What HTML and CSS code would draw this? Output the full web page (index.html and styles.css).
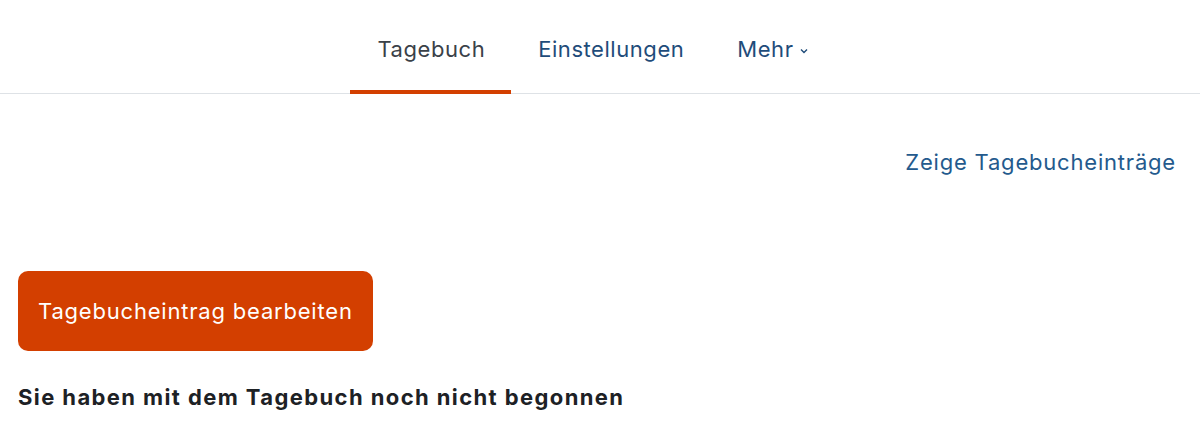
FILE: index.html
```html
<!DOCTYPE html>
<html lang="de">
<head>
    <meta charset="UTF-8">
    <meta name="viewport" content="width=device-width, initial-scale=1.0">
    <title>Tagebuch</title>
    <link rel="stylesheet" href="styles.css">
</head>
<body>
    <nav class="tabs">
        <a class="tab active" href="#">Tagebuch</a>
        <a class="tab" href="#">Einstellungen</a>
        <a class="tab" href="#">Mehr
            <svg class="caret" width="10" height="10" viewBox="0 0 10 10"><path d="M2 3.5 L5 6.5 L8 3.5" fill="none" stroke="currentColor" stroke-width="1.4"/></svg>
        </a>
    </nav>

    <main class="content">
        <div class="entries-link">
            <a href="#">Zeige Tagebucheinträge</a>
        </div>

        <button class="edit-button">Tagebucheintrag bearbeiten</button>

        <p class="notice">Sie haben mit dem Tagebuch noch nicht begonnen</p>
    </main>
</body>
</html>
```

FILE: styles.css
```css
body {
    font-family: 'Inter', sans-serif;
    margin: 0;
    background-color: #ffffff;
    color: #1d2125;
    font-size: 22px;
    line-height: 26px;
    letter-spacing: 0.8px;
}

.tabs {
    display: flex;
    justify-content: center;
    border-bottom: 1px solid #dee2e6;
    height: 94px;
    box-sizing: border-box;
    padding-right: 15px;
}

.tab {
    display: flex;
    align-items: flex-start;
    gap: 5px;
    padding: 36px 26px 0 27px;
    color: #1f4c7a;
    text-decoration: none;
    letter-spacing: 0.55px;
    border-bottom: 4px solid transparent;
    margin-bottom: -1px;
}

.tab.active {
    color: #3a4148;
    border-bottom-color: #d33f00; /* aktive Unterstreichung */
}

.caret {
    margin-top: 10px;
}

.content {
    padding: 0 24px 0 18px;
}

.entries-link {
    display: flex;
    justify-content: flex-end;
    margin-top: 55px;
}

.entries-link a {
    color: #245a8d;
    text-decoration: none;
}

.edit-button {
    margin-top: 96px;
    background-color: #d33f00;
    color: #ffffff;
    border: none;
    border-radius: 10px;
    padding: 28px 20px;
    font-family: inherit;
    font-size: 22px;
    line-height: 24px;
    letter-spacing: 0.8px;
}

.notice {
    margin: 33px 0 0;
    font-weight: bold;
    letter-spacing: 1.4px;
}
```
